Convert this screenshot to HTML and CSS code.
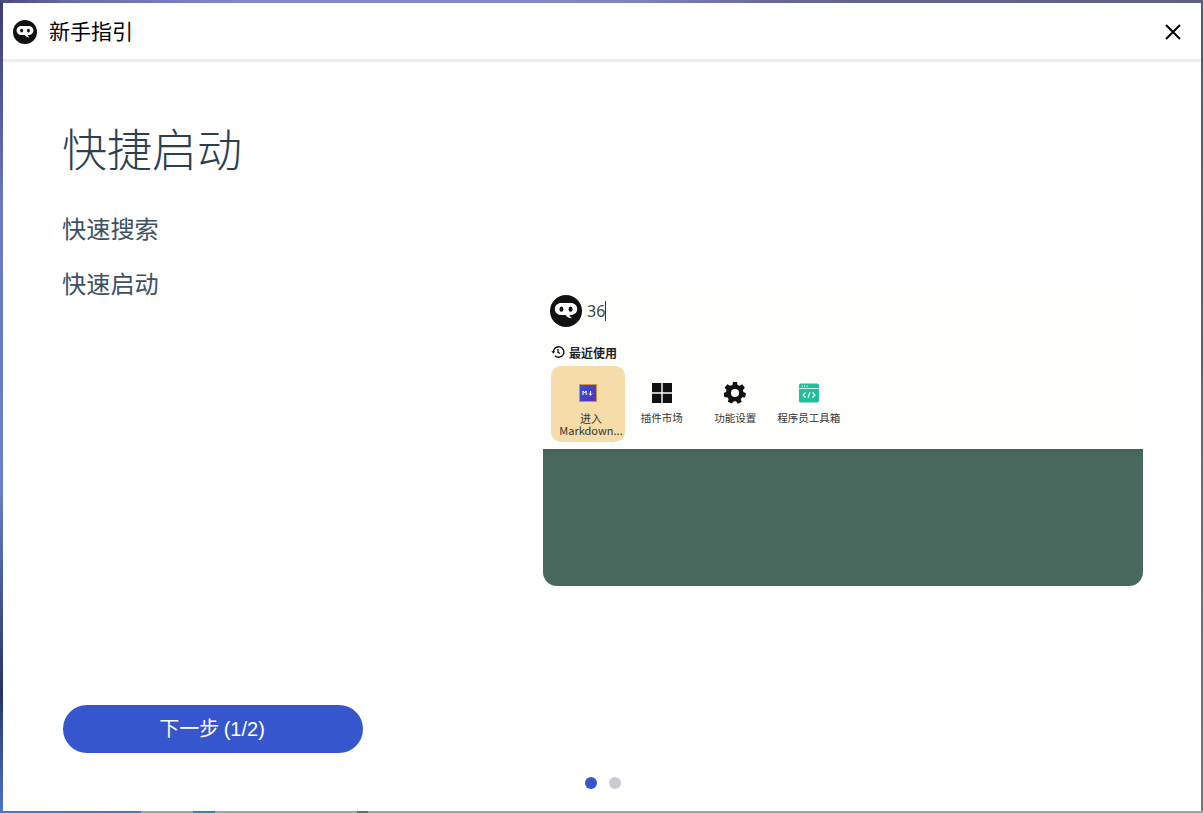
FILE: index.html
```html
<!DOCTYPE html>
<html lang="zh-CN">
<head>
  <meta charset="UTF-8" />
  <meta name="viewport" content="width=device-width, initial-scale=1" />
  <title>新手指引</title>
  <link rel="stylesheet" href="styles.css">
</head>
<body>
  <div class="window">
    <header class="titlebar">
      <svg class="logo" viewBox="0 0 24 24">
        <circle cx="12" cy="12" r="12" fill="#111"/>
        <path d="M8.500 6h7c2.800 0 4.900 1.900 4.900 4.500S18.300 15 15.500 15h-.9c.3 1 .9 1.800 1.900 2.500-1.900.1-3.700-.9-4.800-2.500H8.500c-2.800 0-4.900-1.900-4.900-4.500S5.700 6 8.500 6z" fill="#fff"/>
        <ellipse cx="8.600" cy="10.600" rx="1.500" ry="1.900" fill="#111"/>
        <ellipse cx="15.400" cy="10.600" rx="1.500" ry="1.900" fill="#111"/>
      </svg>
      <span class="title">新手指引</span>
      <svg class="close" viewBox="0 0 16 16">
        <path d="M1 1l14 14M15 1L1 15" stroke="#000" stroke-width="2" fill="none"/>
      </svg>
    </header>

    <main class="guide">
      <section class="intro">
        <h1>快捷启动</h1>
        <p>快速搜索</p>
        <p>快速启动</p>
        <button class="next">下一步 (1/2)</button>
      </section>

      <section class="preview">
        <div class="launcher">
          <div class="search">
            <svg class="search-logo" viewBox="0 0 24 24">
              <circle cx="12" cy="12" r="12" fill="#111"/>
              <path d="M8.500 6h7c2.800 0 4.900 1.900 4.900 4.500S18.300 15 15.500 15h-.9c.3 1 .9 1.800 1.900 2.500-1.900.1-3.700-.9-4.800-2.500H8.500c-2.800 0-4.900-1.900-4.900-4.500S5.700 6 8.500 6z" fill="#fff"/>
              <ellipse cx="8.600" cy="10.600" rx="1.500" ry="1.900" fill="#111"/>
              <ellipse cx="15.400" cy="10.600" rx="1.500" ry="1.900" fill="#111"/>
            </svg>
            <span class="query">36</span>
          </div>
          <div class="recent">
            <svg viewBox="0 0 24 24" class="clock">
              <path d="M4 12a9 9 0 1 1 2.800 6.500" fill="none" stroke="#111" stroke-width="2.400"/>
              <path d="M0.800 10.500h6.400L4 15z" fill="#111"/>
              <path d="M12 7v5.500l3.600 2" fill="none" stroke="#111" stroke-width="2.200"/>
            </svg>
            最近使用
          </div>
          <div class="tiles">
            <div class="tile active">
              <svg class="tile-icon" viewBox="0 0 20 20">
                <defs>
                  <linearGradient id="md" x1="0" y1="0" x2="1" y2="1">
                    <stop offset="0" stop-color="#2f55d8"/>
                    <stop offset="1" stop-color="#5a2fb0"/>
                  </linearGradient>
                </defs>
                <rect x="1.500" y="1.500" width="17" height="17" fill="url(#md)" stroke="#d8913f"/>
                <path d="M5 12V8l1.600 2L8.200 8v4M12.500 8v4M10.900 10.400l1.600 2 1.600-2" fill="none" stroke="#fff" stroke-width="1"/>
              </svg>
              <span class="tile-name">进入 Markdown...</span>
            </div>
            <div class="tile">
              <svg class="tile-icon" viewBox="0 0 20 20">
                <path d="M0 0h9.300v9.300H0zM10.700 0H20v9.300h-9.300zM0 10.700h9.300V20H0zM10.700 10.700H20V20h-9.300z" fill="#111"/>
              </svg>
              <span class="tile-name">插件市场</span>
            </div>
            <div class="tile">
              <svg class="tile-icon gear" viewBox="0 0 24 24">
                <path fill="#111" fill-rule="evenodd" d="M9.800 0h4.400l.6 3.200 2.200 1 2.800-1.700 3 3.700-2.200 2.400.5 2.400 2.900 1.200-1 4.600-3.200-.1-1.500 2 1 3-4.300 2-1.800-2.700h-2.400L8.400 23.500l-4.300-2 1-3-1.500-2-3.200.1-1-4.600 2.900-1.200.5-2.400L.6 6.200l3-3.700 2.800 1.700 2.800-1zM12 7.600a4.400 4.400 0 1 0 0 8.800 4.400 4.400 0 0 0 0-8.800z"/>
              </svg>
              <span class="tile-name">功能设置</span>
            </div>
            <div class="tile">
              <svg class="tile-icon" viewBox="0 0 20 20">
                <rect x="0" y="0.500" width="20" height="19" rx="2" fill="#20c09a"/>
                <path d="M0 5.500h20" stroke="#fff" stroke-width=".8"/>
                <path d="M2.500 3.200h1.200M5 3.200h1.200M7.500 3.200h1.200" stroke="#fff" stroke-width="1"/>
                <path d="M6.500 9.500L4 12l2.500 2.500M13.500 9.500L16 12l-2.500 2.500M11 9l-2 6" fill="none" stroke="#fff" stroke-width="1.100"/>
              </svg>
              <span class="tile-name">程序员工具箱</span>
            </div>
          </div>
        </div>
        <div class="backdrop"></div>
      </section>
    </main>

    <footer class="dots">
      <span class="dot current"></span>
      <span class="dot"></span>
    </footer>
  </div>
</body>
</html>
```

FILE: styles.css
```css
* { box-sizing: border-box; }
html, body { height: 100%; }
body {
  margin: 0;
  padding: 3px 2px 2px 3px;
  overflow: hidden;
  font-family: "Noto Sans CJK SC", "Liberation Sans", sans-serif;
  /* desktop showing round the window: top, bottom, left, right strips */
  background:
    linear-gradient(90deg, #4a4a7c 0, #6a6ea8 6%, #8088c4 20%, #7f86c0 52%, #66668e 66%, #5e5e80 100%) top / 100% 3px no-repeat,
    linear-gradient(90deg, #4f74c4 0, #5a70b0 141px, #a5a5a5 141px, #a5a5a5 193px, #2f8aa8 193px, #2f8aa8 215px, #a5a5a5 215px, #a5a5a5 357px, #6a6a6a 357px, #6a6a6a 368px, #a5a5a5 368px) bottom / 100% 2px no-repeat,
    linear-gradient(180deg, #3c3c70 0, #6a78bc 25%, #6a80c8 60%, #26345f 85%, #4f74c4 100%) left / 3px 100% no-repeat,
    linear-gradient(180deg, #55557a 0, #777 100%) right / 2px 100% no-repeat;
}

.window {
  height: 808px;
  background: #fff;
  border-radius: 10px;
  display: flex;
  flex-direction: column;
  overflow: hidden;
}

.titlebar {
  height: 59px;
  flex: none;
  display: flex;
  align-items: center;
  padding: 0 20px 0 10px;
  border-bottom: 3px solid #eeeef0;
}
.logo { width: 24px; height: 24px; margin-top: 1px; }
.title {
  margin-left: 12px;
  margin-top: -3px;
  font-size: 21px;
  color: #000;
}
.close { width: 16px; height: 16px; margin-left: auto; margin-top: 1px; }

.guide {
  flex: 1;
  display: flex;
  padding: 0 58px 0 60px;
}

.intro {
  width: 480px;
  display: flex;
  flex-direction: column;
  color: #34495e;
}
.intro h1 {
  margin: 53px 0 29px -1px;
  font-size: 45px;
  line-height: 66px;
  font-weight: 300;
  color: #2c3e52;
}
.intro p {
  margin: 0 0 20px -1px;
  font-size: 24.200px;
  line-height: 35px;
  font-weight: 400;
  color: #3d5166;
}
.next {
  width: 300px;
  height: 48px;
  margin-top: auto;
  padding: 0 2px 3px 0;
  border: 0;
  border-radius: 24px;
  background: #3556cc;
  color: #fff;
  font-family: "Liberation Sans", "Noto Sans CJK SC", sans-serif;
  font-size: 20px;
  word-spacing: -1px;
}

.preview {
  width: 600px;
  height: 296px;
  margin-top: 228px;
  display: flex;
  flex-direction: column;
  border-radius: 0 0 14px 14px;
  overflow: hidden;
}
.launcher {
  height: 159px;
  flex: none;
  background: #fefefc;
  padding: 5px 0 0 7px;
}
.search { display: flex; align-items: center; height: 32px; }
.search-logo { width: 32px; height: 32px; }
.query {
  margin-left: 5px;
  border-right: 1px solid #333;
  font-family: "Noto Sans", sans-serif;
  font-size: 16px;
  line-height: 20px;
  color: #444;
}
.recent {
  display: flex;
  align-items: center;
  gap: 4px;
  height: 20px;
  margin: 15px 0 4px 1px;
  font-size: 12px;
  font-weight: 700;
  color: #222;
}
.clock { width: 14px; height: 14px; }

.tiles { display: flex; margin-left: 1px; }
.tile {
  width: 73.500px;
  height: 76px;
  display: flex;
  flex-direction: column;
  align-items: center;
  border-radius: 10px;
  padding: 17px 5px 0;
  font-size: 10.500px;
  line-height: 12px;
  text-align: center;
  color: #333;
}
.tile.active { background: #f5dca8; width: 74px; padding: 17px 0 0; font-size: 11px; }
.tile.active .tile-name { margin-left: 6px; }
.tile-icon { width: 20px; height: 20px; flex: none; }
.gear { width: 22px; height: 22px; margin: -1px 0; }
.tile-name { margin-top: 9px; }
.tile:last-child { padding: 17px 0 0; }

.backdrop { flex: 1; background: linear-gradient(180deg, #45625a 0, #4a695e 10px); }

.dots {
  height: 58px;
  flex: none;
  display: flex;
  justify-content: center;
  gap: 12px;
  padding-top: 24px;
  margin-left: 1px;
}
.dot { width: 12px; height: 12px; border-radius: 50%; background: #c9cbd1; }
.dot.current { background: #3556cc; }
```
